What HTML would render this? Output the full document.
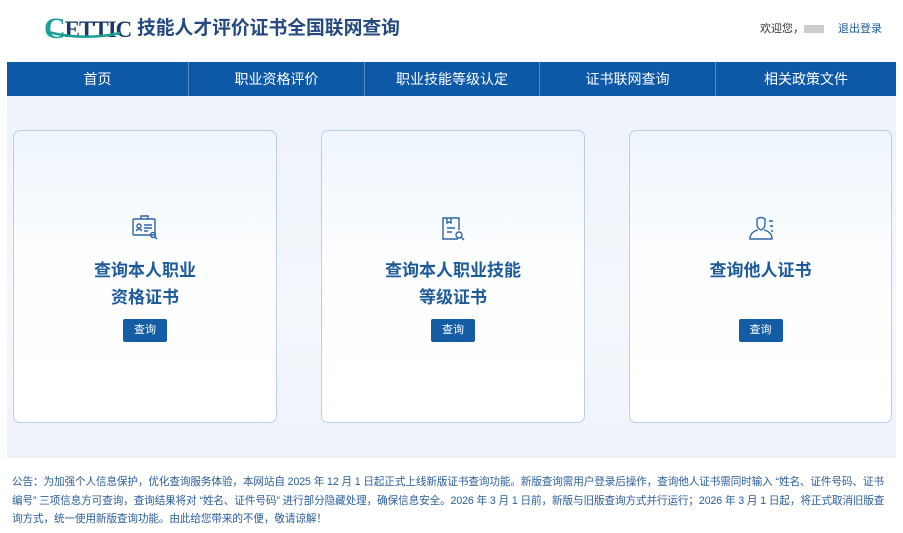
<!DOCTYPE html>
<html><head><meta charset="utf-8"><style>
*{margin:0;padding:0;box-sizing:border-box}
body{width:903px;height:533px;background:#fff;font-family:"Liberation Sans","Noto Sans CJK SC",sans-serif;position:relative;overflow:hidden}
.abs{position:absolute}
.title{left:137px;top:13px;font-size:18.8px;font-weight:bold;color:#24497f}
.logo{left:44px;top:11px;font-family:"Liberation Serif",serif;font-weight:bold;font-size:23px;color:#1b3a6b;letter-spacing:-1px}
.nav{left:7px;top:62px;width:889px;height:34px;background:#0d59a8;display:flex}
.nav div{color:#fff;font-size:14px;text-align:center;line-height:34px;border-right:1px solid #5b8cc6}
.main{left:7px;top:96px;width:889px;height:362px;background:linear-gradient(180deg,#eef3fa,#f4f7fc 60%,#eef3fa)}
.card{top:130px;height:293px;border:1px solid #b9d0ea;border-radius:7px;background:linear-gradient(180deg,#eef5fd,#fdfeff 45%,#fff);text-align:center}
.card h3{position:absolute;left:0;right:0;top:126px;font-size:17px;line-height:27px;color:#1d5a99;font-weight:bold}
.btn{position:absolute;left:50%;margin-left:-22px;top:188px;width:44px;height:23px;background:#145da5;color:#fff;font-size:11px;line-height:23px;border-radius:2px}
.ic{position:absolute;left:50%;margin-left:-14px;top:84px}
.notice{left:12px;top:473px;width:882px;font-size:10.6px;line-height:18.5px;color:#2a5d9a;letter-spacing:-0.1px}
</style></head><body>
<div class="abs logo"><span style="color:#1aa094;font-size:30px;position:relative;top:1px">C</span>ETTIC</div>
<svg class="abs" style="left:44px;top:29px" width="80" height="10"><path d="M4 3 Q40 12 76 4" stroke="#1aa094" stroke-width="2.5" fill="none"/></svg>
<div class="abs title">技能人才评价证书全国联网查询</div>
<div class="abs" style="left:760px;top:20px;font-size:11px;color:#333">欢迎您，<span style="display:inline-block;width:20px;height:8px;background:#ccc;vertical-align:middle"></span></div>
<div class="abs" style="left:838px;top:20px;font-size:11px;color:#1d5a99">退出登录</div>
<div class="abs nav"><div style="width:182px">首页</div><div style="width:176px">职业资格评价</div><div style="width:175px">职业技能等级认定</div><div style="width:176px">证书联网查询</div><div style="width:180px;border-right:none">相关政策文件</div></div>
<div class="abs main"></div>
<div class="abs card" style="left:13px;width:264px">
<svg class="ic" width="28" height="26" viewBox="0 0 28 26" fill="none" stroke="#2b66a8" stroke-width="1.4"><rect x="2" y="4" width="22" height="16" rx="1"/><path d="M10 4V1h7v3"/><circle cx="8" cy="11" r="2"/><path d="M5 16q3-4 6 0M13 10h8M13 13h8M13 16h4"/><circle cx="22" cy="20" r="2.5"/><path d="M24 22l2 2"/></svg>
<h3>查询本人职业<br>资格证书</h3><div class="btn">查询</div></div>
<div class="abs card" style="left:321px;width:264px">
<svg class="ic" width="28" height="28" viewBox="0 0 28 28" fill="none" stroke="#2b66a8" stroke-width="1.4"><path d="M19 24H4V3h16v12"/><path d="M8 3v5l2-1 2 1V3M8 13h8M8 17h5"/><circle cx="20" cy="20" r="3"/><path d="M22 22l3 3"/></svg>
<h3>查询本人职业技能<br>等级证书</h3><div class="btn">查询</div></div>
<div class="abs card" style="left:629px;width:263px">
<svg class="ic" width="30" height="28" viewBox="0 0 30 28" fill="none" stroke="#2b66a8" stroke-width="1.4"><path d="M10 4q4-3 8 0v6q-1 4-4 5-3-1-4-5z"/><path d="M11 15q-8 2-8 9h22q0-7-8-9"/><path d="M22 6h4M23 11h3M24 16h2"/></svg>
<h3 style="top:126px">查询他人证书</h3><div class="btn">查询</div></div>
<div class="abs notice">公告：为加强个人信息保护，优化查询服务体验，本网站自 2025 年 12 月 1 日起正式上线新版证书查询功能。新版查询需用户登录后操作，查询他人证书需同时输入 “姓名、证件号码、证书编号” 三项信息方可查询，查询结果将对 “姓名、证件号码” 进行部分隐藏处理，确保信息安全。2026 年 3 月 1 日前，新版与旧版查询方式并行运行；2026 年 3 月 1 日起，将正式取消旧版查询方式，统一使用新版查询功能。由此给您带来的不便，敬请谅解！</div>
</body></html>
